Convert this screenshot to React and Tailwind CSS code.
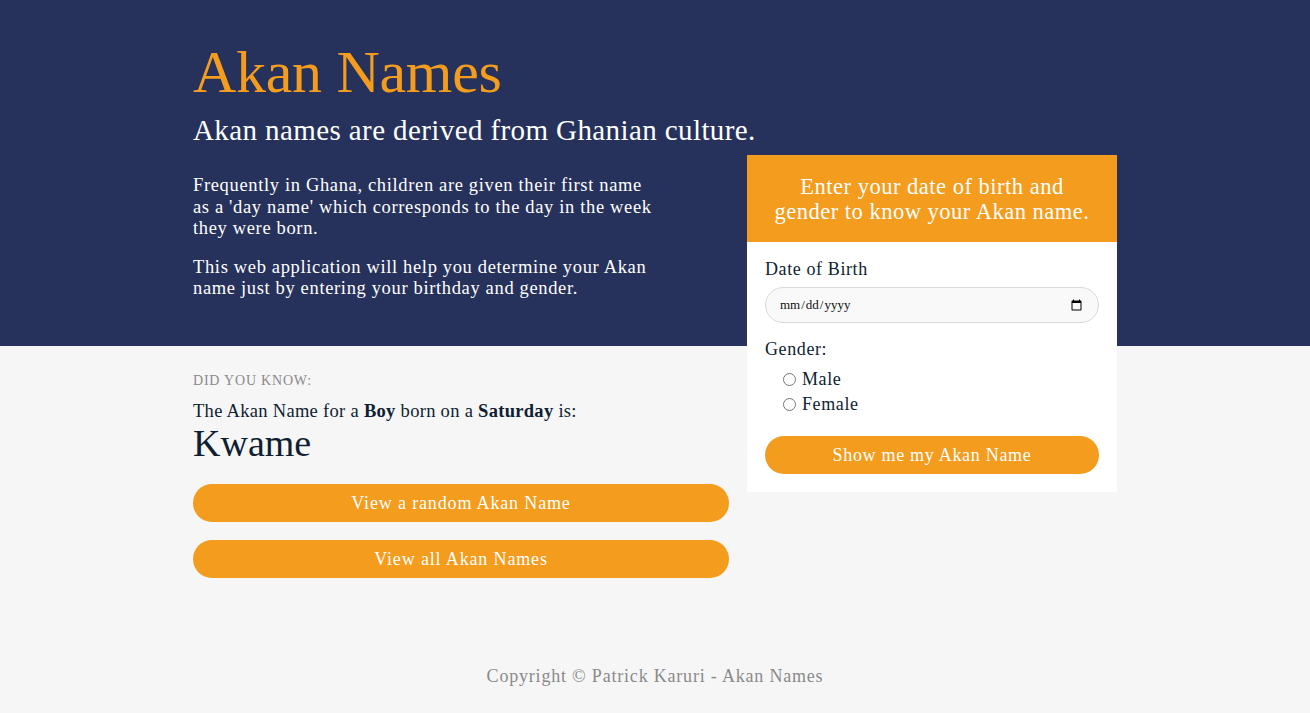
import React, { useState } from 'react';

const serif = { fontFamily: '"Liberation Serif", "DejaVu Serif", serif' };

export default function App() {
  const [gender, setGender] = useState('');

  return (
    <div className="min-h-screen bg-[#f6f6f6] text-[#0f1e32]" style={serif}>
      {/* Header band */}
      <header className="bg-[#26325c]">
        <div className="mx-auto w-[924px] pt-[36px]">
          <h1 className="text-[60px] leading-[72px] tracking-[-0.3px] text-[#f39c1d]">Akan Names</h1>
          <h2 className="mt-[4px] text-[29px] leading-[36px] tracking-[0.4px] text-white">Akan names are derived from Ghanian culture.</h2>
          <div className="mt-[7px] flex gap-[18px]">
            <div className="w-[536px] pt-[20px] text-[18.5px] leading-[21.5px] tracking-[0.65px] text-white">
              <p className="w-[462px]">
                Frequently in Ghana, children are given their first name as a 'day name' which corresponds to the day in the week they were born.
              </p>
              <p className="mt-[17px] w-[462px]">
                This web application will help you determine your Akan name just by entering your birthday and gender.
              </p>
            </div>

            {/* Form card */}
            <div className="-mb-[146px] w-[370px] bg-white">
              <div className="flex h-[87px] items-center justify-center bg-[#f39c1d] px-[26px] text-center text-[22.5px] leading-[25px] tracking-[0.5px] text-white">
                Enter your date of birth and gender to know your Akan name.
              </div>
              <div className="px-[18px] pt-[15px] pb-[18px] tracking-[0.6px]">
                <label className="block text-[18px] leading-[24px]">Date of Birth</label>
                <input
                  type="date"
                  className="mt-[6px] block h-[36px] w-full rounded-full border border-[#d9d9d9] bg-[#f9f9f9] px-[13px] text-[13px] tracking-normal text-[#111]"
                />
                <div className="mt-[14px] text-[18px] leading-[24px]">Gender:</div>
                <div className="mt-[6px] pl-[18px] text-[18px] leading-[25px]">
                  <label className="flex items-center gap-[6px]">
                    <input type="radio" name="gender" checked={gender === 'male'} onChange={() => setGender('male')} className="h-[13px] w-[13px]" />
                    Male
                  </label>
                  <label className="flex items-center gap-[6px]">
                    <input type="radio" name="gender" checked={gender === 'female'} onChange={() => setGender('female')} className="h-[13px] w-[13px]" />
                    Female
                  </label>
                </div>
                <button className="mt-[19px] h-[38px] w-full rounded-full bg-[#f39c1d] text-[18px] tracking-[0.7px] text-white">
                  Show me my Akan Name
                </button>
              </div>
            </div>
          </div>
        </div>
      </header>

      {/* Did you know */}
      <main className="mx-auto w-[924px] pt-[26px]">
        <div className="w-[536px]">
          <div className="text-[14px] leading-[18px] uppercase tracking-[0.8px] text-[#8a8a8a]">Did you know:</div>
          <p className="mt-[10px] text-[18.5px] leading-[22px] tracking-[0.3px]">
            The Akan Name for a <b>Boy</b> born on a <b>Saturday</b> is:
          </p>
          <div className="text-[38px] leading-[42px]">Kwame</div>
          <button className="mt-[20px] block h-[38px] w-full rounded-full bg-[#f39c1d] text-[18px] tracking-[0.85px] text-white">
            View a random Akan Name
          </button>
          <button className="mt-[18px] block h-[38px] w-full rounded-full bg-[#f39c1d] text-[18px] tracking-[0.85px] text-white">
            View all Akan Names
          </button>
        </div>
      </main>

      <footer className="pt-[86px] pb-[24px] text-center text-[18px] leading-[24px] tracking-[0.8px] text-[#8a8a8a]">
        Copyright © Patrick Karuri - Akan Names
      </footer>
    </div>
  );
}
